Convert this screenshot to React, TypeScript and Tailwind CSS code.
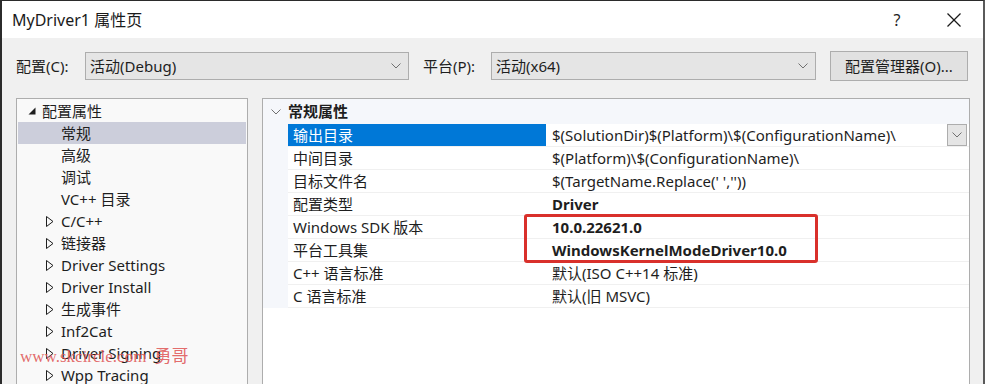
import React from 'react';

const FONT = { fontFamily: '"Noto Sans", "Noto Sans CJK SC", sans-serif' };

function Chevron({ className = '' }: { className?: string }) {
  return (
    <svg width="10" height="6" viewBox="0 0 10 6" className={className}>
      <polyline points="0.5,0.5 5,5 9.5,0.5" fill="none" stroke="#707070" strokeWidth="1" />
    </svg>
  );
}

function Combo({ value, width }: { value: string; width: string }) {
  return (
    <div className={`${width} h-[28px] bg-[#e5e5e5] border border-[#adadad] flex items-center justify-between pl-[4px] pr-[7px]`}>
      <span className="text-[15px] text-[#1e1e1e]">{value}</span>
      <Chevron />
    </div>
  );
}

function Closed() {
  return (
    <svg width="8" height="11" viewBox="0 0 8 11">
      <polygon points="0.5,0.5 7,5.5 0.5,10.5" fill="none" stroke="#1e1e1e" strokeWidth="1" />
    </svg>
  );
}

const children = ['常规', '高级', '调试', 'VC++ 目录'];
const folders = ['C/C++', '链接器', 'Driver Settings', 'Driver Install', '生成事件', 'Inf2Cat', 'Driver Signing', 'Wpp Tracing'];

const props: { name: string; value: string; bold?: boolean }[] = [
  { name: '输出目录', value: '$(SolutionDir)$(Platform)\\$(ConfigurationName)\\' },
  { name: '中间目录', value: '$(Platform)\\$(ConfigurationName)\\' },
  { name: '目标文件名', value: "$(TargetName.Replace(' ',''))" },
  { name: '配置类型', value: 'Driver', bold: true },
  { name: 'Windows SDK 版本', value: '10.0.22621.0', bold: true },
  { name: '平台工具集', value: 'WindowsKernelModeDriver10.0', bold: true },
  { name: 'C++ 语言标准', value: '默认(ISO C++14 标准)' },
  { name: 'C 语言标准', value: '默认(旧 MSVC)' },
];

export default function App() {
  return (
    <div style={FONT} className="relative w-[985px] h-[384px] overflow-hidden bg-[#f0f0f0] border-l-2 border-t border-r-2 border-l-[#2b2b2b] border-t-[#2b2b2b] border-r-[#5a5a5a] text-[#1e1e1e]">
      {/* Title bar */}
      <div className="h-[37px] bg-white flex items-center justify-between pl-[10px]">
        <span className="text-[16px] text-[#1a1a1a]">MyDriver1 属性页</span>
        <div className="flex items-center">
          <span className="text-[16px] w-[20px] text-center mr-[40px]">?</span>
          <svg width="14" height="14" viewBox="0 0 14 14" className="mr-[22px]">
            <line x1="0.5" y1="0.5" x2="13.5" y2="13.5" stroke="#1a1a1a" strokeWidth="1.2" />
            <line x1="13.5" y1="0.5" x2="0.5" y2="13.5" stroke="#1a1a1a" strokeWidth="1.2" />
          </svg>
        </div>
      </div>

      {/* Config row */}
      <div className="flex items-center h-[60px] pl-[14px] pb-[4px]">
        <span className="text-[15px] w-[69px]">配置(C):</span>
        <Combo value="活动(Debug)" width="w-[324px]" />
        <span className="text-[15px] ml-[14px] w-[68px]">平台(P):</span>
        <Combo value="活动(x64)" width="w-[325px]" />
        <div className="ml-[14px] w-[138px] h-[30px] bg-[#e1e1e1] border border-[#adadad] flex items-center justify-center text-[15px]">
          配置管理器(O)...
        </div>
      </div>

      {/* Panels */}
      <div className="flex pl-[14px] gap-[14px]">
        {/* Tree */}
        <div className="w-[232px] h-[300px] bg-[#f9f9f9] border border-[#adadad] pt-[1px] px-[1px] text-[15px]">
          <div className="h-[22px] flex items-center">
            <svg width="8" height="8" viewBox="0 0 8 8" className="ml-[10px] mr-[6px]">
              <polygon points="7.5,0.5 7.5,7.5 0.5,7.5" fill="#1e1e1e" />
            </svg>
            <span>配置属性</span>
          </div>
          {children.map((c, i) => (
            <div key={c} className={`h-[22px] flex items-center pl-[43px] ${i === 0 ? 'bg-[#cccedb]' : ''}`}>
              {c}
            </div>
          ))}
          {folders.map((f) => (
            <div key={f} className="h-[22px] flex items-center pl-[28px] gap-[7px]">
              <Closed />
              <span>{f}</span>
            </div>
          ))}
        </div>

        {/* Property grid */}
        <div className="w-[708px] h-[300px] bg-white border border-[#adadad] text-[15px]">
          <div className="h-[25px] flex items-center bg-[#f5f7fb]">
            <div className="w-[25px] flex justify-center">
              <Chevron />
            </div>
            <span className="font-bold">常规属性</span>
          </div>
          <div className="flex">
            <div className="w-[25px] bg-[#f5f7fb]" />
            <div className="flex-1">
              {props.map((p, i) => (
                <div key={p.name} className="h-[23px] flex border-b border-[#f0f0f0]">
                  <div className={`w-[258px] flex items-center pl-[5px] ${i === 0 ? 'bg-[#0078d7] text-white' : ''}`}>
                    {p.name}
                  </div>
                  <div className={`flex-1 flex items-center pl-[6px] pr-[2px] justify-between ${p.bold ? 'font-bold' : ''}`}>
                    <span>{p.value}</span>
                    {i === 0 && (
                      <div className="w-[20px] h-[22px] bg-[#e5e5e5] border border-[#adadad] flex items-center justify-center">
                        <Chevron />
                      </div>
                    )}
                  </div>
                </div>
              ))}
            </div>
          </div>
        </div>
      </div>

      {/* Highlight box */}
      <div className="absolute left-[522px] top-[213px] w-[294px] h-[49px] border-[3px] border-[#d9302b] rounded-[3px]" />

      {/* Watermark */}
      <div className="absolute left-[18px] top-[343px] text-[17px] text-[#e05a5a]/90 whitespace-nowrap" style={{ fontFamily: '"Liberation Serif", "Noto Sans CJK SC", serif' }}>
        www.skcircle.com <span className="ml-[4px]">勇哥</span>
      </div>
    </div>
  );
}
